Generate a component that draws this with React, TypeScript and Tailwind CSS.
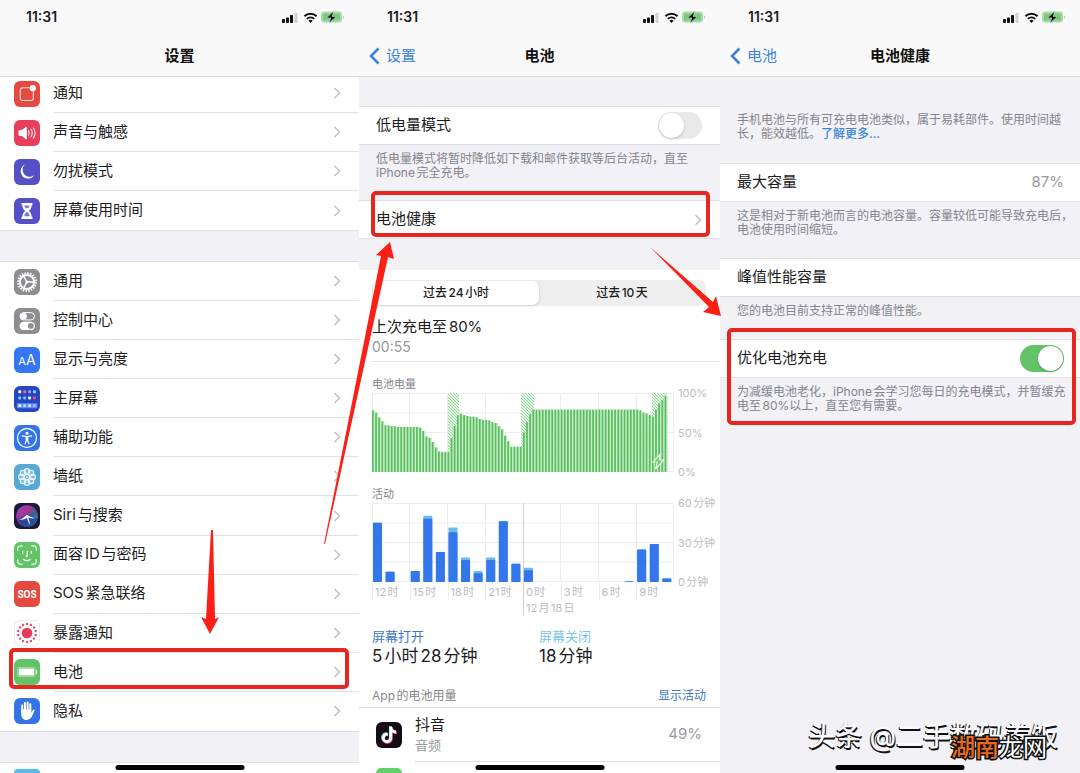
import type { ReactNode } from "react";
import { FaTiktok } from "react-icons/fa6";

type Item = {
  label: string;
  tile: string;
  icon: ReactNode;
  marked?: boolean;
};

/* ---------- small shared drawings ---------- */

function Chevron() {
  return (
    <svg width="8" height="12" viewBox="0 0 8 12" fill="none" className="shrink-0" aria-hidden="true">
      <path d="M1.5 1 6.5 6l-5 5" stroke="#c4c4c8" strokeWidth="1.6" />
    </svg>
  );
}

function Mark({ className }: { className: string }) {
  return (
    <span
      aria-hidden="true"
      className={`pointer-events-none absolute z-20 rounded-[5px] border-4 border-[#e8251f] ${className}`}
    />
  );
}

function StatusIcons() {
  return (
    <svg width="64" height="14" viewBox="0 0 64 14" aria-hidden="true">
      <rect x="1" y="9" width="3" height="4" rx="0.8" fill="#111" />
      <rect x="5" y="7.5" width="3" height="5.5" rx="0.8" fill="#111" />
      <rect x="9" y="5" width="3" height="8" rx="0.8" fill="#111" />
      <rect x="13.5" y="3" width="3" height="10" rx="0.8" fill="#d2d2d6" />
      <path d="M23.4 6.2a9 9 0 0 1 12.2 0" stroke="#111" strokeWidth="2" fill="none" />
      <path d="M25.7 8.9a5.7 5.7 0 0 1 7.6 0" stroke="#111" strokeWidth="1.9" fill="none" />
      <path d="M29.5 13l-2.1-2.2a3 3 0 0 1 4.2 0z" fill="#111" />
      <rect x="40" y="1.5" width="21" height="11" rx="3.2" fill="#a9dcab" />
      <rect x="42" y="3.5" width="17" height="7" rx="1.6" fill="#7cc97f" />
      <path d="M62 5.2c1.6.6 1.6 3 0 3.6z" fill="#a9dcab" />
      <path d="M52.8 1 45.6 7.900h4.200l-1.800 5.400 7.200-6.800h-4.200l1.800-5.500z" fill="#111" stroke="#c9efca" strokeWidth="0.5" />
    </svg>
  );
}

function Header({ title, back }: { title: string; back?: string }) {
  return (
    <header className="relative z-10 shrink-0 border-b border-[#d9d9dc] bg-[#f9f9fa]">
      <div className={`flex h-[33px] items-center justify-between pr-[14px] ${back ? "pl-7" : "pl-[26px]"}`}>
        <span className="text-sm font-semibold text-[#1c1c1e]">11:31</span>
        <StatusIcons />
      </div>
      <div className="grid h-[43px] grid-cols-[1fr_auto_1fr] items-center px-[10px] pt-[3px]">
        <div>
          {back && (
            <a href="#back" className="flex items-center gap-[6px] text-[15px] text-[#3d82d8]">
              <svg width="11" height="18" viewBox="0 0 11 18" fill="none" aria-hidden="true">
                <path d="M9.5 1.500 2 9l7.500 7.500" stroke="#3a7fd9" strokeWidth="2.500" />
              </svg>
              {back}
            </a>
          )}
        </div>
        <h1 className="text-[15px] font-bold text-[#111]">{title}</h1>
      </div>
    </header>
  );
}

function HomeBar() {
  return (
    <div className="absolute bottom-[3px] left-1/2 z-10 h-[5px] w-[129px] -translate-x-1/2 rounded-full bg-black" />
  );
}

/* ---------- settings icons, all on a 26px tile ---------- */

function Glyph({ children }: { children: ReactNode }) {
  return (
    <svg width="26" height="26" viewBox="0 0 26 26" fill="none" aria-hidden="true">
      {children}
    </svg>
  );
}

const ring = (n: number, r: number) =>
  Array.from({ length: n }, (_, i) => {
    const a = (i * 2 * Math.PI) / n;
    return { x: 13 + r * Math.sin(a), y: 13 - r * Math.cos(a) };
  });

const BellBadge = (
  <Glyph>
    <path d="M15.500 6.700H8.500A2.200 2.200 0 0 0 6.300 8.900v8.400a2.200 2.200 0 0 0 2.200 2.200h8.600a2.200 2.200 0 0 0 2.200-2.200V10.500" stroke="#fff" strokeOpacity="0.85" strokeWidth="1.1" />
    <circle cx="18.8" cy="7.2" r="3.1" fill="#fff" />
  </Glyph>
);

const Speaker = (
  <Glyph>
    <path d="M5 10.600h2.800L12.300 7v12l-4.500-3.600H5z" fill="#fff" stroke="#fff" strokeLinejoin="round" />
    <path d="M14.500 10.700q1.500 2.300 0 4.600M17 9.300q2.500 3.700 0 7.400M19.400 8q3.400 5 0 10" stroke="#fff" strokeOpacity="0.9" strokeWidth="1.1" strokeLinecap="round" />
  </Glyph>
);

const Moon = (
  <Glyph>
    <path d="M11 5.500a7.400 7.400 0 1 0 9.400 10.600A7 7 0 0 1 11 5.500z" fill="#fff" />
  </Glyph>
);

const Hourglass = (
  <Glyph>
    <path d="M7.500 5h11v2.200h-.9c0 3-1 4.300-3 5.800 2 1.500 3 2.800 3 5.800h.9V21h-11v-2.200h.9c0-3 1-4.300 3-5.800-2-1.500-3-2.800-3-5.800h-.9z" fill="#fff" />
    <path d="M10.200 7.500h5.600c-.3 1.300-1 2-1.800 2.700h-2c-.8-.7-1.500-1.400-1.800-2.700zM13 13.800c1.500 1 2.600 2.500 2.800 4.500h-5.600c.2-2 1.300-3.500 2.800-4.500z" fill="#7d78da" />
  </Glyph>
);

const Gear = (
  <Glyph>
    <circle cx="13" cy="13" r="8.9" stroke="#fff" strokeWidth="2" strokeDasharray="1.55 1.246" />
    <circle cx="13" cy="13" r="7.1" stroke="#fff" strokeWidth="2" />
    <path d="M13 13h6.500M13 13 9.700 7.400M13 13l-3.300 5.600" stroke="#fff" strokeWidth="1.3" />
    <circle cx="13" cy="13" r="1.5" fill="#fff" />
  </Glyph>
);

const Switches = (
  <Glyph>
    <rect x="6" y="4.6" width="14.5" height="7.3" rx="3.65" stroke="#fff" strokeWidth="1" />
    <circle cx="9.7" cy="8.25" r="3.2" fill="#fff" />
    <rect x="5.5" y="13.8" width="15.5" height="8.3" rx="4.15" fill="#fff" />
    <circle cx="16.8" cy="17.95" r="2.9" fill="#8e8e92" />
  </Glyph>
);

const dotColors = ["#fff", "#f0668a", "#b48cf0", "#7fd6f5", "#6fd3f7", "#8bb4ff", "#e8f1ff", "#f0506a"];
const HomeGrid = (
  <Glyph>
    {dotColors.map((c, i) => (
      <rect key={i} x={4.3 + (i % 4) * 4.9} y={4.3 + Math.floor(i / 4) * 6.2} width="2.9" height="2.9" rx="0.8" fill={c} />
    ))}
    <rect x="2.8" y="17.2" width="20.4" height="5" rx="1.2" fill="#5f8df5" />
    {["#fff", "#9fe3ff", "#d6e6ff", "#c6b2ff"].map((c, i) => (
      <rect key={c} x={4.3 + i * 4.9} y="18.2" width="2.9" height="2.9" rx="0.8" fill={c} />
    ))}
  </Glyph>
);

const Person = (
  <Glyph>
    <circle cx="13" cy="13" r="9.5" stroke="#fff" strokeOpacity="0.9" strokeWidth="1.3" />
    <circle cx="13" cy="8.3" r="1.5" fill="#fff" />
    <path d="M8.300 10.900l4.700.7 4.700-.7M13 14l-1.900 4.800M13 14l1.900 4.800" stroke="#fff" strokeWidth="1.2" strokeLinecap="round" />
    <path d="M11.700 11.200h2.600l.1 4h-2.800z" fill="#fff" />
  </Glyph>
);

const Flower = (
  <Glyph>
    {ring(8, 5.7).map((p, i) => (
      <circle key={i} cx={p.x} cy={p.y} r="2.7" stroke="#eaf7ff" strokeWidth="1.1" fill="#fff" fillOpacity="0.25" />
    ))}
    <circle cx="13" cy="13" r="2.6" stroke="#eaf7ff" strokeWidth="1.1" />
    <circle cx="13" cy="13" r="1" fill="#fff" />
  </Glyph>
);

const Siri = (
  <Glyph>
    <defs>
      <linearGradient id="siri" x1="3" y1="4" x2="23" y2="22" gradientUnits="userSpaceOnUse">
        <stop offset="0" stopColor="#7a4ad0" />
        <stop offset="0.35" stopColor="#b0328f" />
        <stop offset="0.65" stopColor="#35628c" />
        <stop offset="1" stopColor="#2ba7a0" />
      </linearGradient>
    </defs>
    <circle cx="13" cy="13" r="10.8" fill="url(#siri)" />
    <path d="M2.800 15.500C7 16 9.500 11.800 12.800 11c3.600.6 6 3.600 10.600 4.500-2 5.500-6 8.200-10.400 8.200S4.200 20.500 2.800 15.500z" fill="#253fa5" fillOpacity="0.75" />
    <path d="M4.500 17c4-1 6.500-3.700 8.500-5.200 2.300 1.400 4.700 3 8.300 3.300-3.300.6-5.500.2-7-.5.800 2.700 1.500 4.700 1.700 7.400-1.500-2.300-2.400-4.500-3-7-2 1.300-4.800 2-8.500 2z" fill="#e9f4ff" />
  </Glyph>
);

const FaceId = (
  <Glyph>
    <path d="M3.800 8.300V6.200a2.400 2.400 0 0 1 2.400-2.400h2.100M17.700 3.800h2.100a2.400 2.400 0 0 1 2.400 2.400v2.100M22.200 17.700v2.100a2.400 2.400 0 0 1-2.400 2.400h-2.100M8.300 22.200H6.200a2.400 2.400 0 0 1-2.400-2.400v-2.100" stroke="#e6fae7" strokeWidth="1.2" strokeLinecap="round" />
    <path d="M8.700 9.500v1.800M17.300 9.500v1.800M13.200 9.500v4.300q0 .8-1 .8M9.800 17.500q3.200 2.500 6.400 0" stroke="#fff" strokeWidth="1.3" strokeLinecap="round" />
  </Glyph>
);

const Exposure = (
  <Glyph>
    <circle cx="13" cy="13" r="5.8" fill="#e63b5a" />
    {ring(14, 9.7).map((p, i) => (
      <circle key={i} cx={p.x} cy={p.y} r="1.3" fill="#e0506b" />
    ))}
  </Glyph>
);

const Battery = (
  <Glyph>
    <rect x="4.6" y="9.5" width="15.6" height="7" rx="1" fill="#fff" />
    <rect x="3.4" y="8.3" width="18" height="9.4" rx="2.2" stroke="#fff" strokeOpacity="0.4" />
    <path d="M22.600 11.500v3" stroke="#fff" strokeOpacity="0.7" strokeWidth="1.2" strokeLinecap="round" />
  </Glyph>
);

const Hand = (
  <Glyph>
    <path d="M8.200 14V7.400M10.900 12V4.900M13.600 12V4.400M16.300 12V6.200" stroke="#fff" strokeWidth="2" strokeLinecap="round" />
    <path d="M7.200 11.500h10.100v3.200c.5-.9 1-2 1.700-2.800.9-.8 2 0 1.500 1.100l-2.600 5.300c-1 2-2.500 3.600-5.300 3.600-3.600 0-5.400-2.500-5.400-6z" fill="#fff" />
  </Glyph>
);

const groupOne: Item[] = [
  { label: "通知", tile: "bg-[#e5493f]", icon: BellBadge },
  { label: "声音与触感", tile: "bg-[#e63e5c]", icon: Speaker },
  { label: "勿扰模式", tile: "bg-[#5550c8]", icon: Moon },
  { label: "屏幕使用时间", tile: "bg-[#5550c8]", icon: Hourglass },
];

const groupTwo: Item[] = [
  { label: "通用", tile: "bg-[#8e8e92]", icon: Gear },
  { label: "控制中心", tile: "bg-[#8e8e92]", icon: Switches },
  {
    label: "显示与亮度",
    tile: "bg-[#3477ee]",
    icon: (
      <span className="flex items-baseline text-white">
        <span className="text-[11px]">A</span>
        <span className="text-sm">A</span>
      </span>
    ),
  },
  { label: "主屏幕", tile: "bg-[#2547c4]", icon: HomeGrid },
  { label: "辅助功能", tile: "bg-[#3474e4]", icon: Person },
  { label: "墙纸", tile: "bg-[#56a9d4]", icon: Flower },
  { label: "Siri与搜索", tile: "bg-[#1d1a38]", icon: Siri },
  { label: "面容ID与密码", tile: "bg-[#62c466]", icon: FaceId },
  {
    label: "SOS紧急联络",
    tile: "bg-[#e5493f]",
    icon: <span className="font-['Roboto'] text-[10px] font-bold text-white">SOS</span>,
  },
  { label: "暴露通知", tile: "bg-white border border-[#ececee]", icon: Exposure },
  { label: "电池", tile: "bg-[#62c466]", icon: Battery, marked: true },
  { label: "隐私", tile: "bg-[#3474e4]", icon: Hand },
];

function SettingsRow({ item, last }: { item: Item; last: boolean }) {
  return (
    <li className="relative flex">
      {item.marked && <Mark className="-top-[5px] right-[10px] bottom-[3px] left-[9px]" />}
      <a href={`#${item.label}`} className="flex grow items-center gap-[13px] pl-[14px]">
        <span className={`flex size-[26px] shrink-0 items-center justify-center overflow-hidden rounded-md ${item.tile}`}>
          {item.icon}
        </span>
        <span className={`flex grow items-center justify-between self-stretch pr-[18px] text-[15px] ${last ? "" : "border-b border-[#e2e2e5]"}`}>
          {item.label}
          <Chevron />
        </span>
      </a>
    </li>
  );
}

/* ---------- battery charts ---------- */

const levels = [
  78, 75, 69, 64, 59, 59, 58, 58, 57, 57, 57, 57, 57, 57, 57, 56, 52, 45, 43, 38, 31, 26, 25, 25, 25,
  43, 58, 72, 74, 72, 71, 70, 70, 69, 67, 66, 66, 65, 63, 62, 58, 54, 46, 39, 32, 32, 32, 32,
  50, 63, 73, ...Array<number>(34).fill(79), 78, 75, 74, 72, 70, 79, 87, 91, 96,
];
const charging = [
  { x: 76, w: 11 },
  { x: 149, w: 13 },
  { x: 280, w: 15 },
];

// [screen on, total] as a share of the hour
const hours = [
  [75, 75], [13, 13], [0, 0], [14, 14], [80, 84], [38, 38], [63, 69], [28, 31],
  [11, 14], [28, 31], [77, 77], [23, 23], [15, 18], [0, 0], [0, 0], [0, 0],
  [0, 0], [0, 0], [0, 0], [0, 0], [1, 1], [41, 41], [48, 48], [4, 5],
];

function GridLines({ solidAt }: { solidAt?: number }) {
  return (
    <g stroke="#ededf0">
      {[0, 1, 2, 3, 4].map((i) => (
        <path key={i} d={`M0 ${0.5 + i * 19.5}H302`} />
      ))}
      {[0, 1, 2, 3, 4, 5, 6, 7, 8].map((i) => (
        <path key={i} d={`M${Math.min(301.5, Math.floor(i * 37.75) + 0.5)} 0V79`} stroke={i === solidAt ? "#cfcfd4" : undefined} />
      ))}
    </g>
  );
}

function LevelChart() {
  const step = 3.146;
  return (
    <svg width="302" height="79" viewBox="0 0 302 79" role="img" aria-label="电池电量">
      <defs>
        <pattern id="hatch" width="3" height="3" patternUnits="userSpaceOnUse">
          <rect width="3" height="3" fill="#e3f5e4" />
          <path d="M0 0l3 3M-1 2l2 2M2-1l2 2" stroke="#8fd492" strokeWidth="0.9" />
        </pattern>
      </defs>
      <GridLines />
      {charging.map((c) => (
        <rect key={c.x} x={c.x} y="0" width={c.w} height="79" fill="url(#hatch)" />
      ))}
      {levels.map((v, i) => (
        <g key={i}>
          <rect x={i * step} y={79 - v * 0.79} width={step} height={v * 0.79} fill="#c6ecc8" />
          <rect x={i * step} y={79 - v * 0.79} width="1.7" height={v * 0.79} fill="#5abd60" />
        </g>
      ))}
      <path d="M289 60.500l-8 8.500h4.500l-2 7 8-9H287z" fill="#62c466" stroke="#e3f7e4" strokeWidth="1.2" />
    </svg>
  );
}

function ActivityChart() {
  return (
    <svg width="302" height="79" viewBox="0 0 302 79" role="img" aria-label="活动">
      <GridLines solidAt={4} />
      {hours.map(([on, total], i) => (
        <g key={i}>
          <rect x={1 + i * 12.58} y={79 - total * 0.79} width="9" height={total * 0.79} rx="0.8" fill="#6cb9ec" />
          <rect x={1 + i * 12.58} y={79 - on * 0.79} width="9" height={on * 0.79} rx="0.8" fill="#3477ea" />
        </g>
      ))}
    </svg>
  );
}

function Axis({ labels }: { labels: string[] }) {
  return (
    <div className="-my-2 flex flex-col justify-between pl-1 text-[11px] leading-4 whitespace-nowrap text-[#bcbcc2]">
      {labels.map((l) => (
        <span key={l}>{l}</span>
      ))}
    </div>
  );
}

const note = "pl-[17px] pt-[7px] text-xs leading-[14px] whitespace-nowrap text-[#85858b]";
const row = "relative flex h-[39px] items-center justify-between border-y border-[#e0e0e4] bg-white pl-[17px] text-[15px]";
const toggle =
  "h-[27px] w-11 appearance-none rounded-full bg-[#e9e9eb] p-px before:block before:size-[25px] before:rounded-full before:bg-white before:shadow-[0_1px_3px_rgba(0,0,0,0.2)] checked:bg-[#62c466] checked:before:translate-x-[17px]";

/* ---------- the three screens ---------- */

function SettingsScreen() {
  return (
    <section className="relative flex flex-col overflow-hidden bg-[#f1f1f6]">
      <Header title="设置" />
      <ul className="-mt-[3px] grid shrink-0 auto-rows-[39px] border-b border-[#e0e0e4] bg-white">
        {groupOne.map((item, i) => (
          <SettingsRow key={item.label} item={item} last={i === groupOne.length - 1} />
        ))}
      </ul>
      <ul className="my-[30px] grid grow auto-rows-fr border-y border-[#e0e0e4] bg-white">
        {groupTwo.map((item, i) => (
          <SettingsRow key={item.label} item={item} last={i === groupTwo.length - 1} />
        ))}
      </ul>
      <div className="h-[11px] border-t border-[#e0e0e4] bg-white pt-[6px] pl-[14px]">
        <div className="h-1 w-[26px] rounded-t-md bg-[#5ab8ea]" />
      </div>
      <HomeBar />
    </section>
  );
}

function BatteryScreen() {
  return (
    <section className="relative flex flex-col overflow-hidden bg-white">
      <Header title="电池" back="设置" />
      <div className="bg-[#f1f1f6] pt-[29px] pb-[31px]">
        <div className={`${row} pr-[18px]`}>
          <label htmlFor="low-power">低电量模式</label>
          <input id="low-power" type="checkbox" role="switch" className={toggle} />
        </div>
        <p className={`${note} pb-5`}>
          低电量模式将暂时降低如下载和邮件获取等后台活动，直至
          <br />
          iPhone完全充电。
        </p>
        <a href="#health" className={`${row} pr-[18px]`}>
          <Mark className="-top-[10px] right-[10px] bottom-px left-3" />
          电池健康
          <Chevron />
        </a>
      </div>

      <div className="pt-[10px] pl-[13px]">
        <div className="mr-[14px] grid h-[26px] grid-cols-2 rounded-lg bg-[#eeeeef] p-px text-xs font-medium">
          <button type="button" aria-pressed="true" className="rounded-[7px] bg-white shadow-[0_1px_3px_rgba(0,0,0,0.15)]">
            过去24小时
          </button>
          <button type="button" aria-pressed="false">过去10天</button>
        </div>
        <div className="mt-[11px] border-b border-[#e4e4e7] pb-1">
          <p className="text-[15px] leading-5">上次充电至80%</p>
          <p className="text-sm leading-5 text-[#98989d]">00:55</p>
        </div>

        <h2 className="mt-[14px] mb-px text-[11px] leading-4 text-[#85858b]">电池电量</h2>
        <div className="flex">
          <LevelChart />
          <Axis labels={["100%", "50%", "0%"]} />
        </div>

        <h2 className="mt-[14px] mb-px text-[11px] leading-4 text-[#85858b]">活动</h2>
        <div className="flex">
          <ActivityChart />
          <Axis labels={["60分钟", "30分钟", "0分钟"]} />
        </div>
        <div className="grid w-[302px] grid-cols-8 text-[11px] leading-4 whitespace-nowrap text-[#bcbcc2]">
          {["12时", "15时", "18时", "21时", "0时", "3时", "6时", "9时"].map((t) => (
            <span key={t} className={`border-l pt-[2px] pl-[2px] ${t === "0时" ? "border-[#cfcfd4]" : "border-[#ededf0]"}`}>
              {t}
            </span>
          ))}
          <span className="col-start-5 border-l border-[#cfcfd4] pl-[2px]">12月18日</span>
        </div>

        <dl className="mt-[11px] grid grid-cols-[167px_1fr]">
          <div>
            <dt className="text-[13px] leading-[18px] text-[#3d79c8]">屏幕打开</dt>
            <dd className="text-[17px] leading-[22px]">5小时28分钟</dd>
          </div>
          <div>
            <dt className="text-[13px] leading-[18px] text-[#7cc4e4]">屏幕关闭</dt>
            <dd className="text-[17px] leading-[22px]">18分钟</dd>
          </div>
        </dl>
      </div>

      <div className="mt-[21px] flex justify-between border-b border-[#dcdce0] pr-[14px] pb-[3px] pl-[13px] text-xs leading-4">
        <h2 className="text-[#85858b]">App的电池用量</h2>
        <button type="button" className="text-[#3d79c8]">显示活动</button>
      </div>
      <div className="flex items-center gap-[13px] pl-[17px]">
        <span className="relative flex size-[26px] shrink-0 items-center justify-center rounded-md bg-[#150c14]">
          <FaTiktok size={17} className="absolute top-[4px] left-[4px] text-[#5fd9dc]" />
          <FaTiktok size={17} className="absolute top-[5px] left-[5px] text-[#e2426b]" />
          <FaTiktok size={16} className="absolute top-[5px] left-[5px] text-white" />
        </span>
        <div className="flex h-[54px] grow items-center justify-between border-b border-[#dcdce0] pr-[18px]">
          <div>
            <p className="text-[15px] leading-5">抖音</p>
            <p className="text-[13px] leading-5 text-[#98989d]">音频</p>
          </div>
          <span className="text-[15px] text-[#98989d]">49%</span>
        </div>
      </div>
      <div className="mt-[6px] ml-[17px] h-[5px] w-[26px] rounded-t-md bg-[#62d06a]" />
      <HomeBar />
    </section>
  );
}

function HealthScreen() {
  return (
    <section className="relative flex flex-col overflow-hidden bg-[#f1f1f6]">
      <Header title="电池健康" back="电池" />
      <p className={`${note} mt-[29px] pb-[22px]`}>
        手机电池与所有可充电电池类似，属于易耗部件。使用时间越
        <br />
        长，能效越低。
        <a href="#more" className="font-medium text-[#3d86dc]">了解更多...</a>
      </p>
      <div className={`${row} pr-4`}>
        <span>最大容量</span>
        <span className="text-[#98989d]">87%</span>
      </div>
      <p className={`${note} pb-[21px]`}>
        这是相对于新电池而言的电池容量。容量较低可能导致充电后，
        <br />
        电池使用时间缩短。
      </p>
      <div className={row}>峰值性能容量</div>
      <p className={`${note} pb-[21px]`}>您的电池目前支持正常的峰值性能。</p>
      <div className="relative">
        <Mark className="-top-[11px] right-1 bottom-0 left-[7px]" />
        <div className={`${row} pr-4`}>
          <label htmlFor="optimized">优化电池充电</label>
          <input id="optimized" type="checkbox" role="switch" defaultChecked className={toggle} />
        </div>
        <p className={`${note} pb-3`}>
          为减缓电池老化，iPhone会学习您每日的充电模式，并暂缓充
          <br />
          电至80%以上，直至您有需要。
        </p>
      </div>

      {/* Watermarks */}
      <p className="absolute right-[22px] bottom-[17px] text-[27px] leading-[38px] font-medium whitespace-nowrap text-[#fafafc] [text-shadow:-1px_1px_0_#111,1px_2px_0_#111]">
        头条 @二手数码养饭
      </p>
      <p className="absolute right-[33px] bottom-[7px] text-2xl leading-9 whitespace-nowrap text-white [-webkit-text-stroke:3px_#111] [paint-order:stroke_fill]">
        <span className="font-medium text-[#ea6a1c]">湖南</span>龙网
      </p>
      <HomeBar />
    </section>
  );
}

export default function App() {
  return (
    <main className="relative grid min-h-screen grid-cols-[359fr_361fr_360fr] bg-white font-['Inter','Noto_Sans_CJK_SC',sans-serif] text-[#1c1c1e] [text-autospace:normal]">
      <SettingsScreen />
      <BatteryScreen />
      <HealthScreen />

      {/* Arrows leading from one screen to the next */}
      <svg viewBox="0 0 1080 773" className="pointer-events-none absolute top-0 left-0 z-30 w-full" fill="#fb1f16" aria-hidden="true">
        <path d="M211 530h2l2 89 4-2-9 17-9-17 5 2z" />
        <path d="M324 544l57-288-5-1 14-13 4 17-6-2-63 287z" />
        <path d="M650 247l63 55 3-6 5 20-18-4 6-5z" />
      </svg>
    </main>
  );
}
